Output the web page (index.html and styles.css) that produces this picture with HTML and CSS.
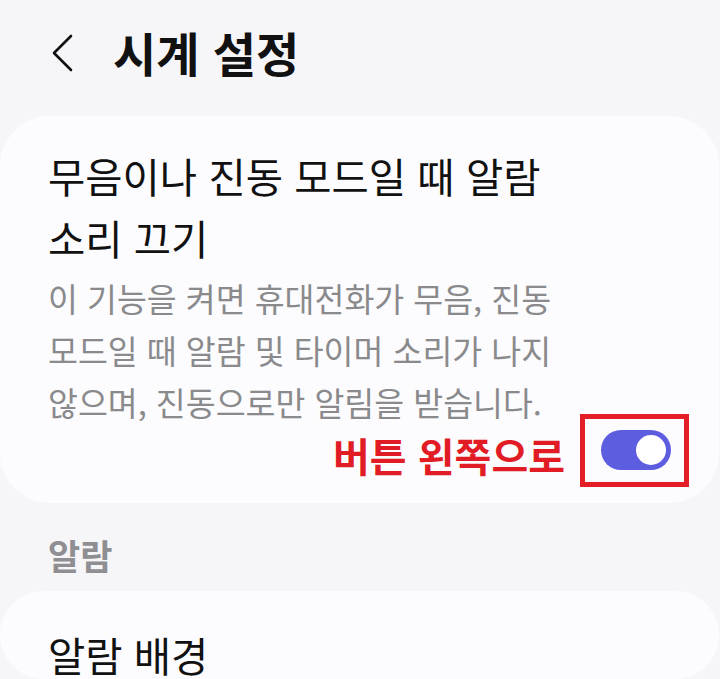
FILE: index.html
```html
<!DOCTYPE html>
<html lang="ko">
<head>
<meta charset="utf-8">
<link rel="stylesheet" href="styles.css">
</head>
<body>
<header class="appbar">
  <svg class="back" width="24" height="40" viewBox="0 0 24 40"><path d="M21 3 L4 20 L21 37" fill="none" stroke="#111" stroke-width="2.6" stroke-linecap="round" stroke-linejoin="round"/></svg>
  <h1 class="title">시계 설정</h1>
</header>
<section class="card">
  <div class="item-title">무음이나 진동 모드일 때 알람<br>소리 끄기</div>
  <div class="item-desc">이 기능을 켜면 휴대전화가 무음, 진동<br>모드일 때 알람 및 타이머 소리가 나지<br>않으며, 진동으로만 알림을 받습니다.</div>
  <div class="action-row">
    <span class="hint">버튼 왼쪽으로</span>
    <div class="hint-box">
      <div class="switch"><div class="knob"></div></div>
    </div>
  </div>
</section>
<div class="section-label">알람</div>
<section class="card card2">
  <div class="item-title item-title-single">알람 배경</div>
</section>
</body>
</html>
```
FILE: styles.css
```css
html, body {
  margin: 0;
  padding: 0;
  background: #f6f6f8;
  font-family: "Noto Sans CJK KR", "Noto Sans", sans-serif;
  color: #111;
  overflow: hidden;
  height: 679px;
}
.appbar {
  display: flex;
  align-items: center;
  padding: 22px 0 34px 50px;
  height: 60px;
}
.back {
  display: block;
  margin-top: 2px;
}
.title {
  margin: 0 0 0 39px;
  font-size: 47px;
  line-height: 60px;
  font-weight: 700;
  color: #111;
}
.card {
  background: #fcfcfe;
  border-radius: 50px;
  margin-right: 1px;
  padding: 29px 30px 16px 48px;
}
.item-title {
  font-size: 40.5px;
  line-height: 62px;
  color: #111;
}
.item-desc {
  margin-top: 3px;
  font-size: 32.5px;
  line-height: 52px;
  color: #8a8a8c;
}
.action-row {
  display: flex;
  justify-content: flex-end;
  align-items: flex-end;
  margin-top: -14px;
}
.hint {
  color: #e11c25;
  font-size: 40px;
  font-weight: 700;
  line-height: 48px;
  margin-right: 15px;
  margin-bottom: 8px;
}
.hint-box {
  width: 99px;
  height: 63px;
  border: 5px solid #e31e26;
  display: flex;
  align-items: center;
  justify-content: center;
}
.switch {
  width: 70px;
  height: 40px;
  border-radius: 20px;
  background: #5d5de0;
  position: relative;
  margin-left: 3px;
  margin-bottom: 2px;
}
.knob {
  position: absolute;
  right: 3px;
  top: 3px;
  width: 30px;
  height: 30px;
  border-radius: 50%;
  background: #fff;
  border: 2px solid #5d5de0;
}
.section-label {
  padding: 31.5px 0 16.5px 48px;
  font-size: 35px;
  line-height: 40px;
  font-weight: 700;
  color: #8e8e93;
}
.card2 {
  padding-top: 39.5px;
  padding-bottom: 0;
}
.item-title-single {
  line-height: 48px;
}
```
